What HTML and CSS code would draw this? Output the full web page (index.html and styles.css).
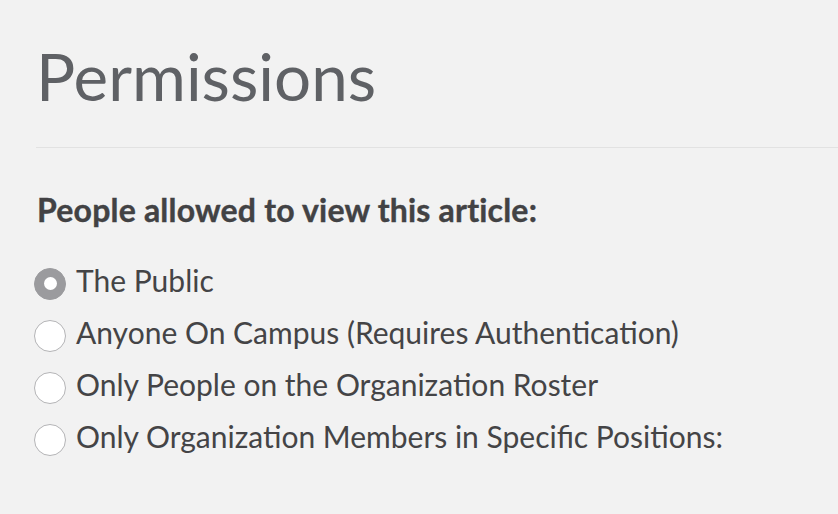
FILE: index.html
```html
<!DOCTYPE html>
<html lang="en">
<head>
<meta charset="utf-8">
<title>Permissions</title>
<link rel="stylesheet" href="styles.css">
</head>
<body>
<main class="page">
  <h1 class="title">Permissions</h1>
  <hr class="divider">
  <section class="perm" role="radiogroup" aria-labelledby="perm-label">
    <h2 class="perm-label" id="perm-label">People allowed to view this article:</h2>
    <div class="options">
      <label class="option"><input class="radio" type="radio" name="view" checked><span class="option-text">The Public</span></label>
      <label class="option"><input class="radio" type="radio" name="view"><span class="option-text">Anyone On Campus (Requires Authentication)</span></label>
      <label class="option"><input class="radio" type="radio" name="view"><span class="option-text">Only People on the Organization Roster</span></label>
      <label class="option"><input class="radio" type="radio" name="view"><span class="option-text">Only Organization Members in Specific Positions:</span></label>
    </div>
  </section>
</main>
</body>
</html>
```
FILE: styles.css
```css
html, body {
  margin: 0;
  padding: 0;
  background: #f2f2f2;
}
body {
  font-family: "Lato", "Open Sans", sans-serif;
  color: #444446;
}
.page {
  padding: 37px 0 0 34px;
  display: flex;
  flex-direction: column;
}
.title {
  margin: 0 0 0 2px;
  font-size: 65.5px;
  line-height: 78.6px;
  font-weight: 400;
  color: #5f6165;
}
.divider {
  margin: 31px 0 0 2px;
  border: 0;
  height: 1px;
  background: #e2e2e2;
}
.perm {
  display: flex;
  flex-direction: column;
}
.perm-label {
  margin: 43px 0 0 3px;
  font-size: 32px;
  line-height: 38.4px;
  font-weight: 700;
  letter-spacing: 0.2px;
  color: #424244;
  -webkit-text-stroke: 0.4px #424244;
}
.options {
  display: flex;
  flex-direction: column;
  margin-top: 25px;
}
.option {
  display: flex;
  align-items: flex-start;
  height: 52px;
  cursor: pointer;
}
.radio {
  appearance: none;
  -webkit-appearance: none;
  margin: 13.6px 10px 0 0;
  width: 32px;
  height: 32px;
  border-radius: 50%;
  background: #ffffff;
  border: 1.5px solid #b4b4b6;
  box-sizing: border-box;
  flex: none;
  display: flex;
  align-items: center;
  justify-content: center;
}
.radio:checked {
  background: #9b9b9e;
  border-color: #9b9b9e;
}
.radio:checked::after {
  content: "";
  width: 13px;
  height: 13px;
  border-radius: 50%;
  background: #ffffff;
}
.option-text {
  font-size: 30px;
  line-height: 52px;
  white-space: nowrap;
}
```
